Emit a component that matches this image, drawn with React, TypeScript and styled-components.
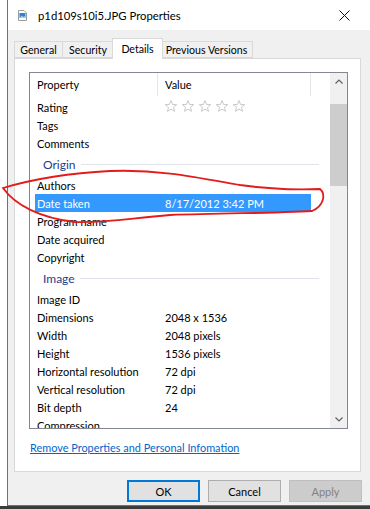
import React from 'react';
import styled, { createGlobalStyle } from 'styled-components';

const GlobalStyle = createGlobalStyle`
  html, body {
    margin: 0;
    padding: 0;
    background: #ffffff;
    font-family: Lato, "Liberation Sans", sans-serif;
    color: #000000;
  }
`;

const Screen = styled.div`
  position: relative;
  width: 370px;
  height: 509px;
  display: flex;
  flex-direction: column;
  overflow: hidden;
`;

const Window = styled.div`
  flex: 1;
  margin-left: 7px;
  display: flex;
  flex-direction: column;
  background: #f0f0f0;
  border-left: 1px solid #2f80d4;
  border-bottom: 1px solid #2f80d4;
`;

const Desktop = styled.div`
  height: 3px;
  background: #3b3b3b;
`;

const TitleBar = styled.div`
  height: 30px;
  display: flex;
  align-items: center;
  padding: 0 10px;
  gap: 11px;
  background: #ffffff;
  font-size: 11.3px;
`;

const TitleText = styled.span`
  flex: 1;
`;

const CloseButton = styled.div`
  width: 30px;
  display: flex;
  justify-content: center;
  margin-right: 1px;
`;

const Body = styled.div`
  flex: 1;
  display: flex;
  flex-direction: column;
  padding: 7px 8px 0 6px;
`;

const TabStrip = styled.div`
  height: 21px;
  display: flex;
  align-items: flex-end;
  font-size: 10.6px;
`;

const Tab = styled.div<{ $active?: boolean; $width: number }>`
  position: relative;
  width: ${(p) => p.$width}px;
  height: ${(p) => (p.$active ? '21px' : '17px')};
  margin: ${(p) => (p.$active ? '0 -2px -1px -2px' : '0 0 0 -1px')};
  z-index: ${(p) => (p.$active ? 2 : 1)};
  display: flex;
  align-items: center;
  justify-content: center;
  white-space: nowrap;
  background: ${(p) => (p.$active ? '#ffffff' : '#f0f0f0')};
  border: 1px solid #d9d9d9;
  border-bottom: ${(p) => (p.$active ? 'none' : '1px solid #d9d9d9')};
  box-sizing: border-box;
  &:first-child {
    margin-left: 0;
  }
`;

const Panel = styled.div`
  width: 347px;
  height: 414px;
  box-sizing: border-box;
  border: 1px solid #d9d9d9;
  background: #ffffff;
  padding: 13px 13px 0 14px;
  display: flex;
  flex-direction: column;
`;

const ListBox = styled.div`
  width: 319px;
  height: 357px;
  box-sizing: border-box;
  border: 1px solid #828790;
  display: flex;
  background: #ffffff;
  font-size: 11px;
`;

const ListContent = styled.div`
  flex: 1;
  overflow: hidden;
  display: flex;
  flex-direction: column;
`;

const HeaderRow = styled.div`
  height: 23px;
  flex-shrink: 0;
  display: grid;
  grid-template-columns: 128px 153px 1fr;
  margin-bottom: 2px;
`;

const HeaderCell = styled.div<{ $divider?: boolean }>`
  display: flex;
  align-items: center;
  padding-left: 7px;
  border-right: ${(p) => (p.$divider ? '1px solid #e5e5e5' : 'none')};
`;

const Row = styled.div<{ $selected?: boolean }>`
  height: 18px;
  flex-shrink: 0;
  width: 276px;
  margin-left: 5px;
  padding-left: 2px;
  box-sizing: border-box;
  display: grid;
  grid-template-columns: 128px 1fr;
  align-items: center;
  background: ${(p) => (p.$selected ? '#3399ff' : 'transparent')};
  color: ${(p) => (p.$selected ? '#ffffff' : '#000000')};
  white-space: nowrap;
`;

const GroupHeader = styled.div`
  height: 24px;
  flex-shrink: 0;
  width: 276px;
  margin-left: 13px;
  display: flex;
  align-items: center;
  gap: 5px;
  color: #1e3c8c;
  font-size: 12px;
  &::after {
    content: '';
    flex: 1;
    height: 1px;
    background: #dfe3ea;
  }
`;

const ScrollBar = styled.div`
  width: 17px;
  display: flex;
  flex-direction: column;
  background: #f0f0f0;
`;

const ScrollArrow = styled.div`
  height: 17px;
  display: flex;
  align-items: center;
  justify-content: center;
`;

const ScrollTrack = styled.div`
  flex: 1;
`;

const ScrollThumb = styled.div`
  margin-top: 14px;
  height: 82px;
  background: #cdcdcd;
`;

const LinkText = styled.a`
  margin-top: 12px;
  padding-left: 1px;
  font-size: 10.9px;
  color: #0066cc;
  text-decoration: underline;
  cursor: pointer;
`;

const ButtonRow = styled.div`
  display: flex;
  justify-content: flex-end;
  gap: 8px;
  margin-top: 8px;
  margin-right: -8px;
  padding-right: 8px;
`;

const Button = styled.button<{ $primary?: boolean; $disabled?: boolean }>`
  width: 73px;
  height: 22px;
  box-sizing: border-box;
  padding: 0;
  font-family: Lato, "Liberation Sans", sans-serif;
  font-size: 11px;
  background: ${(p) => (p.$disabled ? '#cccccc' : '#e1e1e1')};
  color: ${(p) => (p.$disabled ? '#838383' : '#000000')};
  border: ${(p) =>
    p.$primary ? '2px solid #0078d7' : p.$disabled ? '1px solid #bfbfbf' : '1px solid #adadad'};
`;

const Annotation = styled.svg`
  position: absolute;
  left: 0;
  top: 0;
  pointer-events: none;
`;

type Item =
  | { kind: 'row'; label: string; value?: string; selected?: boolean; stars?: boolean }
  | { kind: 'group'; label: string };

const items: Item[] = [
  { kind: 'row', label: 'Rating', stars: true },
  { kind: 'row', label: 'Tags' },
  { kind: 'row', label: 'Comments' },
  { kind: 'group', label: 'Origin' },
  { kind: 'row', label: 'Authors' },
  { kind: 'row', label: 'Date taken', value: '8/17/2012 3:42 PM', selected: true },
  { kind: 'row', label: 'Program name' },
  { kind: 'row', label: 'Date acquired' },
  { kind: 'row', label: 'Copyright' },
  { kind: 'group', label: 'Image' },
  { kind: 'row', label: 'Image ID' },
  { kind: 'row', label: 'Dimensions', value: '2048 x 1536' },
  { kind: 'row', label: 'Width', value: '2048 pixels' },
  { kind: 'row', label: 'Height', value: '1536 pixels' },
  { kind: 'row', label: 'Horizontal resolution', value: '72 dpi' },
  { kind: 'row', label: 'Vertical resolution', value: '72 dpi' },
  { kind: 'row', label: 'Bit depth', value: '24' },
  { kind: 'row', label: 'Compression' },
];

const tabs = [
  { name: 'General', width: 49 },
  { name: 'Security', width: 52 },
  { name: 'Details', width: 51, active: true },
  { name: 'Previous Versions', width: 93 },
];

const FileIcon = () => (
  <svg width="9" height="11" viewBox="0 0 9 11">
    <path d="M0.5 0.5 H6 L8.5 3 V10.5 H0.5 Z" fill="#ffffff" stroke="#9a9a9a" />
    <rect x="1.5" y="3" width="6" height="5" fill="#2f7fd8" />
    <path d="M1.5 8 L4 5.5 L5.5 7 L6.5 6 L7.5 7 V8 Z" fill="#9fd0f5" />
  </svg>
);

const CloseIcon = () => (
  <svg width="11" height="11" viewBox="0 0 11 11">
    <path d="M0.5 0.5 L10.5 10.5 M10.5 0.5 L0.5 10.5" stroke="#111111" strokeWidth="1" />
  </svg>
);

const Stars = () => {
  const star = (cx: number) => {
    const pts: string[] = [];
    for (let i = 0; i < 10; i++) {
      const r = i % 2 === 0 ? 6 : 2.6;
      const a = -Math.PI / 2 + (i * Math.PI) / 5;
      pts.push(`${(cx + r * Math.cos(a)).toFixed(2)},${(6.5 + r * Math.sin(a)).toFixed(2)}`);
    }
    return <polygon key={cx} points={pts.join(' ')} fill="none" stroke="#c3c3c3" strokeWidth="0.9" />;
  };
  return (
    <svg width="84" height="13" viewBox="0 0 84 13">
      {[6, 23, 40, 57, 74].map(star)}
    </svg>
  );
};

const Chevron = ({ up }: { up?: boolean }) => (
  <svg width="8" height="5" viewBox="0 0 8 5">
    <polyline
      points={up ? '0.5,4.5 4,1 7.5,4.5' : '0.5,0.5 4,4 7.5,0.5'}
      fill="none"
      stroke="#606060"
      strokeWidth="1.2"
    />
  </svg>
);

export default function App() {
  return (
    <Screen>
      <GlobalStyle />
      <Window>
        <TitleBar>
          <FileIcon />
          <TitleText>p1d109s10i5.JPG Properties</TitleText>
          <CloseButton>
            <CloseIcon />
          </CloseButton>
        </TitleBar>
        <Body>
          <TabStrip>
            {tabs.map((t) => (
              <Tab key={t.name} $active={t.active} $width={t.width}>
                {t.name}
              </Tab>
            ))}
          </TabStrip>
          <Panel>
            <ListBox>
              <ListContent>
                <HeaderRow>
                  <HeaderCell $divider>Property</HeaderCell>
                  <HeaderCell $divider>Value</HeaderCell>
                  <HeaderCell />
                </HeaderRow>
                {items.map((it, i) =>
                  it.kind === 'group' ? (
                    <GroupHeader key={i}>{it.label}</GroupHeader>
                  ) : (
                    <Row key={i} $selected={it.selected}>
                      <span>{it.label}</span>
                      <span>{it.stars ? <Stars /> : it.value}</span>
                    </Row>
                  )
                )}
              </ListContent>
              <ScrollBar>
                <ScrollArrow>
                  <Chevron up />
                </ScrollArrow>
                <ScrollTrack>
                  <ScrollThumb />
                </ScrollTrack>
                <ScrollArrow>
                  <Chevron />
                </ScrollArrow>
              </ScrollBar>
            </ListBox>
            <LinkText>Remove Properties and Personal Infomation</LinkText>
          </Panel>
          <ButtonRow>
            <Button $primary>OK</Button>
            <Button>Cancel</Button>
            <Button $disabled>Apply</Button>
          </ButtonRow>
        </Body>
      </Window>
      <Desktop />
      <Annotation width="370" height="509" viewBox="0 0 370 509">
        <path
          d="M3 188 C 30 180, 70 173, 110 171 C 160 169, 200 178, 240 185 C 270 189, 300 190, 320 189 C 326 194, 324 206, 312 211 C 280 213, 230 213, 170 215 C 130 218, 110 223, 75 222 C 40 218, 15 205, 3 188 Z"
          fill="none"
          stroke="#e31b1b"
          strokeWidth="1.8"
          strokeLinecap="round"
        />
      </Annotation>
    </Screen>
  );
}
